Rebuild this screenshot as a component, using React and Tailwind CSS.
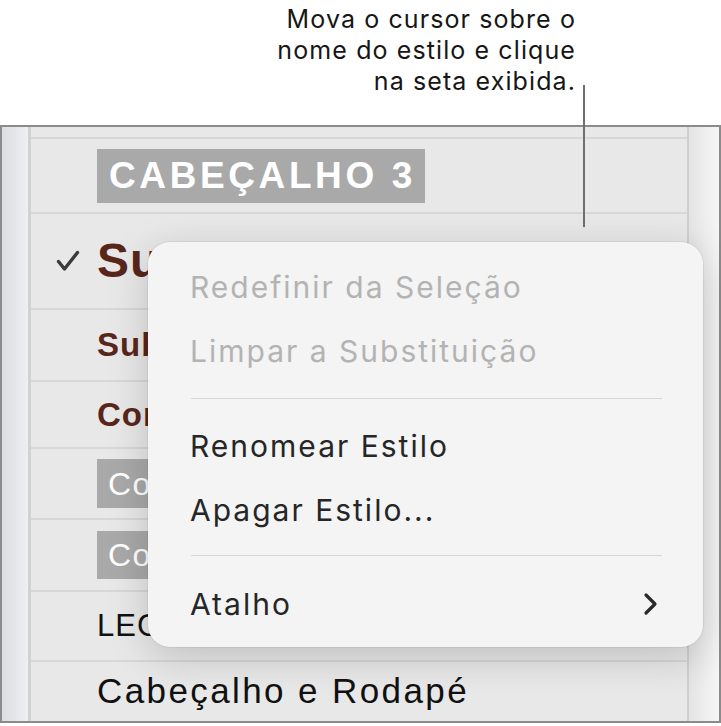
import React from "react";

const sans = { fontFamily: '"Liberation Sans", Arial, sans-serif' };
const ui = { fontFamily: 'Inter, Roboto, sans-serif' };

const line = "border-t-2 border-[#d7d7d7]";

const CheckMark = () => (
  <svg width="24" height="22" viewBox="0 0 24 22" className="shrink-0">
    <path
      d="M2.5 11.5 L8.5 19 L21.5 2.5"
      fill="none"
      stroke="#3b3b3b"
      strokeWidth="3.4"
      strokeLinecap="round"
      strokeLinejoin="round"
    />
  </svg>
);

const Chevron = () => (
  <svg width="15" height="24" viewBox="0 0 15 24" className="shrink-0">
    <path
      d="M3 3 L12 12 L3 21"
      fill="none"
      stroke="#2a2a2a"
      strokeWidth="3.2"
      strokeLinecap="round"
      strokeLinejoin="round"
    />
  </svg>
);

const MenuItem = ({ label, disabled, arrow }) => (
  <div
    className={`h-[64px] flex items-center justify-between pl-[42px] pr-[45px] text-[30px] tracking-[2px] ${
      disabled ? "text-[#b3b3b3]" : "text-[#262626]"
    }`}
  >
    <span>{label}</span>
    {arrow && <Chevron />}
  </div>
);

const StyleMenu = () => (
  <div
    className="absolute left-[148px] top-[242px] w-[555px] h-[405px] rounded-[22px] bg-[#f4f4f4] shadow-[0_10px_40px_rgba(0,0,0,0.18)] ring-1 ring-black/5 pt-[13px]"
    style={ui}
  >
    <MenuItem label="Redefinir da Seleção" disabled />
    <MenuItem label="Limpar a Substituição" disabled />
    <div className="py-[15px] pl-[43px] pr-[41px]">
      <div className="h-px bg-[#d6d6d6]" />
    </div>
    <MenuItem label="Renomear Estilo" />
    <MenuItem label="Apagar Estilo..." />
    <div className="pt-[13px] pb-[16px] pl-[43px] pr-[41px]">
      <div className="h-px bg-[#d6d6d6]" />
    </div>
    <MenuItem label="Atalho" arrow />
  </div>
);

export default function App() {
  return (
    <div className="relative w-[721px] h-[726px] bg-white overflow-hidden">
      {/* callout */}
      <div
        className="h-[125px] pt-[4px] pr-[145px] text-right text-[25px] leading-[31px] tracking-[1.1px] text-[#161616]"
        style={ui}
      >
        <p>Mova o cursor sobre o</p>
        <p>nome do estilo e clique</p>
        <p>na seta exibida.</p>
      </div>

      {/* styles panel */}
      <div className="flex w-[721px] h-[598px] border-2 border-[#8b8b8b]" style={sans}>
        <div className="w-[26px] bg-gradient-to-r from-[#dcdde1] to-[#eeeff2]" />
        <div className="w-[3px] bg-[#d2d2d2]" />
        <div className="flex-1 flex flex-col bg-[#e8e8e8] overflow-hidden">
          <div className="h-[10px]" />
          <div className={`${line} h-[75px] flex items-center pl-[66px]`}>
            <div className="h-[54px] flex items-center pl-[12px] pr-[9px] bg-[#a9a9a9] text-white font-bold text-[37px] tracking-[3.6px]">
              CABEÇALHO 3
            </div>
          </div>
          <div className={`${line} h-[96px] flex items-center pl-[25px] gap-[17px]`}>
            <CheckMark />
            <span className="whitespace-nowrap text-[#58261a] font-bold text-[48px] tracking-[1px]">
              Su
            </span>
          </div>
          <div className={`${line} h-[72px] flex items-center pl-[66px]`}>
            <span className="whitespace-nowrap text-[#58261a] font-bold text-[33px] tracking-[1px]">
              Sub
            </span>
          </div>
          <div className={`${line} h-[67px] flex items-center pl-[66px]`}>
            <span className="whitespace-nowrap text-[#58261a] font-bold text-[33px] tracking-[1px]">
              Cor
            </span>
          </div>
          <div className={`${line} h-[71px] flex items-center pl-[66px]`}>
            <div className="w-[80px] h-[49px] flex items-center px-[11px] bg-[#a9a9a9] text-white text-[32px] tracking-[1.5px] whitespace-nowrap">
              Co
            </div>
          </div>
          <div className={`${line} h-[72px] flex items-center pl-[66px]`}>
            <div className="w-[80px] h-[48px] flex items-center px-[11px] bg-[#a9a9a9] text-white text-[32px] tracking-[1.5px] whitespace-nowrap">
              Co
            </div>
          </div>
          <div className={`${line} h-[70px] flex items-center pl-[66px]`}>
            <span className="whitespace-nowrap text-[#111] text-[31px] tracking-[1px]">
              LEG
            </span>
          </div>
          <div className={`${line} flex-1 flex items-center pl-[66px]`}>
            <span className="text-[#111] text-[35px] tracking-[2.4px]">
              Cabeçalho e Rodapé
            </span>
          </div>
        </div>
        <div className="w-[2px] bg-[#cfcfcf]" />
        <div className="w-[30px] bg-gradient-to-r from-[#e4e4e4] to-[#f6f6f6]" />
      </div>

      {/* pointer line */}
      <div className="absolute left-[583px] top-[85px] w-[2px] h-[142px] bg-[#6f6f6f]" />

      <StyleMenu />
    </div>
  );
}
